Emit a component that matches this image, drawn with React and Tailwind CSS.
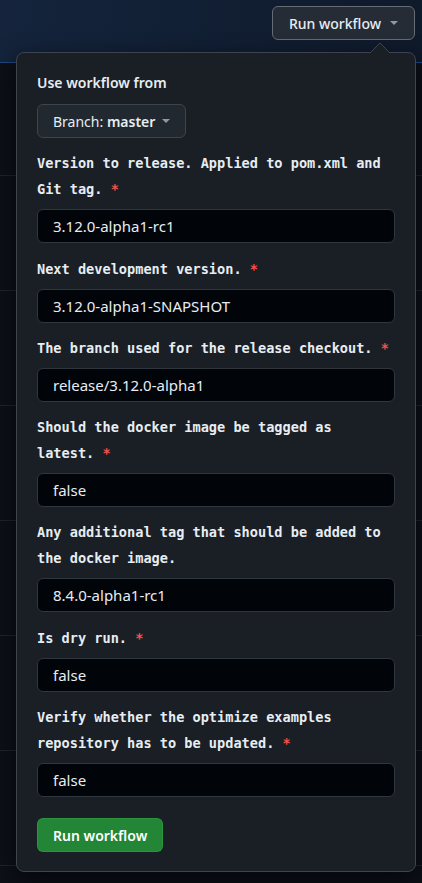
import { useState } from 'react'

const SANS = { fontFamily: '"Noto Sans", "Open Sans", Arial, sans-serif' }
const MONO = { fontFamily: '"DejaVu Sans Mono", "Liberation Mono", monospace' }

const FIELDS = [
  { label: 'Version to release. Applied to pom.xml and Git tag.', value: '3.12.0-alpha1-rc1', req: true },
  { label: 'Next development version.', value: '3.12.0-alpha1-SNAPSHOT', req: true },
  { label: 'The branch used for the release checkout.', value: 'release/3.12.0-alpha1', req: true },
  { label: 'Should the docker image be tagged as latest.', value: 'false', req: true },
  { label: 'Any additional tag that should be added to the docker image.', value: '8.4.0-alpha1-rc1', req: false },
  { label: 'Is dry run.', value: 'false', req: true },
  { label: 'Verify whether the optimize examples repository has to be updated.', value: 'false', req: true },
]

const Caret = ({ className = '' }) => (
  <svg width="8" height="4" viewBox="0 0 8 4" className={className}>
    <path d="M0 0h8L4 4z" fill="currentColor" />
  </svg>
)

function Field({ label, value, req }) {
  const [val, setVal] = useState(value)
  return (
    <div className="mt-[12.3px]">
      <label className="block text-[13.6px] leading-[26px] font-bold text-[#e6edf3]" style={MONO}>
        {label}
        {req && <span className="text-[#f85149]"> *</span>}
      </label>
      <input
        value={val}
        onChange={e => setVal(e.target.value)}
        className="mt-[7px] block w-full h-[34px] rounded-[6px] bg-[#010409] border border-[#30363d]
                   pl-[15px] pr-3 text-[15px] text-[#e6edf3] focus:outline-none"
        style={SANS}
      />
    </div>
  )
}

export default function App() {
  return (
    <div className="relative w-[422px] h-[883px] overflow-hidden bg-[#0d1117]" style={SANS}>
      {/* Header band */}
      <div className="h-[63px] border-b border-[#1f4a84] bg-gradient-to-r from-[#14243c] to-[#0f1a2b] flex justify-end items-start pt-[6px] pr-[7px]">
        <button className="flex items-center gap-[9px] h-[34px] pl-[16px] pr-[16px] rounded-[6px] bg-[#262c36] border border-[#656c76]
                           text-[14px] font-medium text-[#e6edf3]">
          Run workflow
          <Caret className="text-[#9198a1]" />
        </button>
      </div>

      {/* Background rows */}
      <div>
        <div className="h-[113px] border-b border-[#21262d]" />
        {[...Array(7)].map((_, i) => (
          <div key={i} className="h-[115px] border-b border-[#21262d]" />
        ))}
      </div>

      {/* Popover */}
      <div className="absolute left-[16px] top-[52px] w-[400px] rounded-[8px] bg-[#1a1e25] border border-[#3d444d]
                      shadow-[0_8px_24px_rgba(1,4,9,0.75)] px-[20px] pt-[20px] pb-[19px]">
        <svg width="20" height="10" viewBox="0 0 20 10" className="absolute -top-[10px] right-[25px]">
          <path d="M0 10L10 0l10 10z" fill="#1a1e25" />
          <path d="M0 10L10 0l10 10" fill="none" stroke="#3d444d" />
        </svg>

        <div className="text-[14px] leading-[20px] font-semibold text-[#e6edf3]">Use workflow from</div>
        <button className="mt-[11px] flex items-center gap-[7px] h-[34px] px-[15px] rounded-[6px] bg-[#212830] border border-[#3d444d]
                           text-[14px] text-[#e6edf3]">
          <span>Branch: <span className="font-semibold">master</span></span>
          <Caret className="text-[#9198a1]" />
        </button>

        {FIELDS.map(f => <Field key={f.label} {...f} />)}

        <button className="mt-[21px] h-[34px] px-[15px] rounded-[6px] bg-[#238636] border border-[#2ea043]/60
                           text-[14px] font-semibold text-white">
          Run workflow
        </button>
      </div>
    </div>
  )
}
